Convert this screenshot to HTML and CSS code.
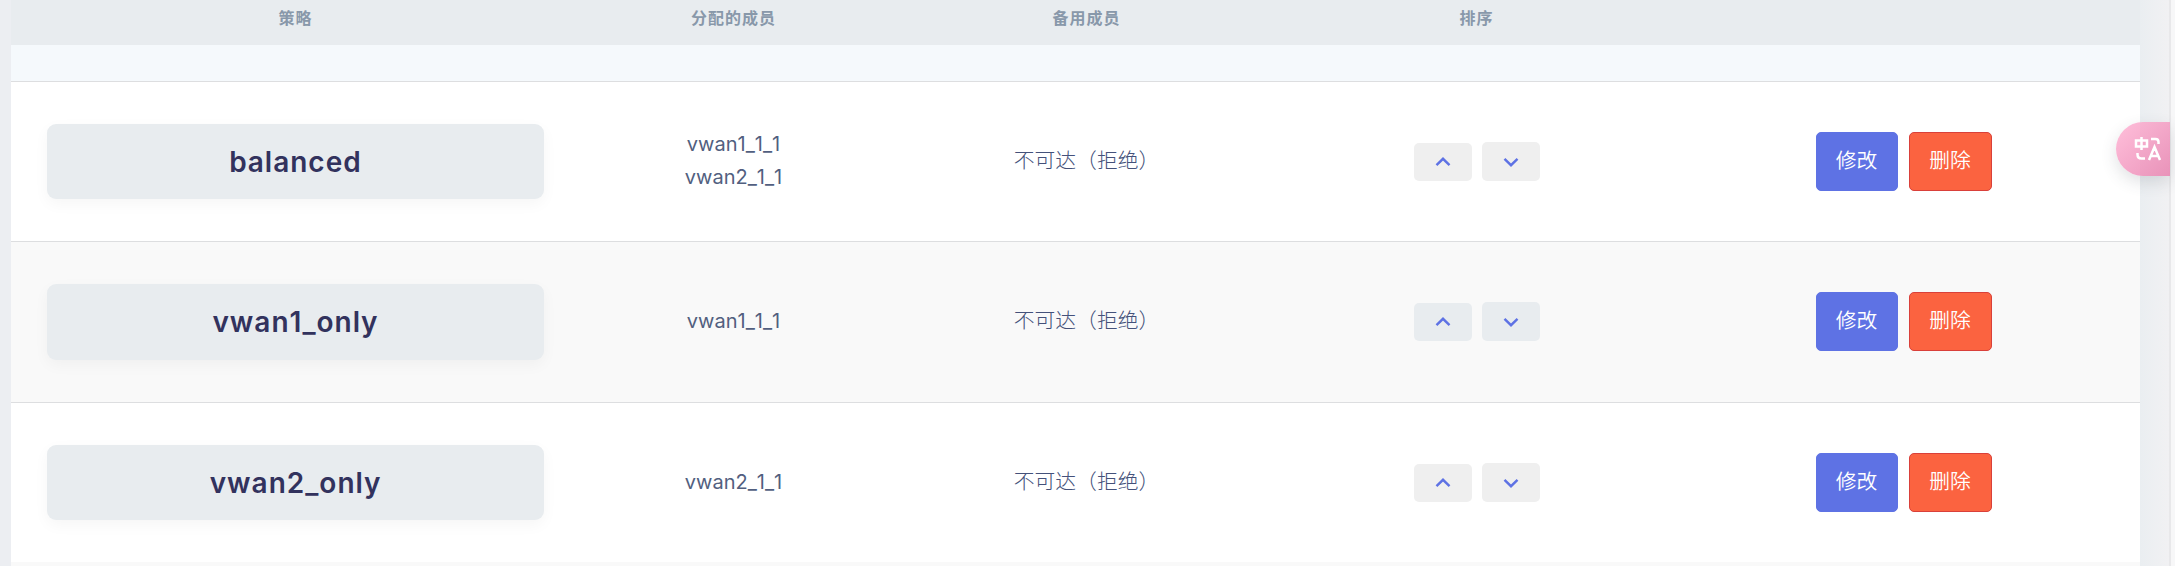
FILE: index.html
```html
<!DOCTYPE html>
<html lang="zh-CN">
<head>
<meta charset="utf-8">
<title>策略</title>
<link rel="stylesheet" href="styles.css">
</head>
<body>
<main class="table">
  <div class="row head"><div>策略</div><div>分配的成员</div><div>备用成员</div><div>排序</div><div></div></div>
  <div class="spacer"></div>
  <div class="row item">
    <div class="name-cell"><div class="name">balanced</div></div>
    <div class="members"><span>vwan1_1_1</span><span>vwan2_1_1</span></div>
    <div class="fallback">不可达（拒绝）</div>
    <div class="sort"><button class="move up"><svg viewBox="0 0 16 10"><path d="M1.5 8.2 8 1.8l6.500 6.400"/></svg></button><button class="move"><svg viewBox="0 0 16 10"><path d="M1.500 1.800 8 8.200l6.500-6.400"/></svg></button></div>
    <div class="actions"><button class="btn edit">修改</button><button class="btn remove">删除</button></div>
  </div>
  <div class="row item alt">
    <div class="name-cell"><div class="name">vwan1_only</div></div>
    <div class="members"><span>vwan1_1_1</span></div>
    <div class="fallback">不可达（拒绝）</div>
    <div class="sort"><button class="move up"><svg viewBox="0 0 16 10"><path d="M1.5 8.2 8 1.8l6.500 6.400"/></svg></button><button class="move"><svg viewBox="0 0 16 10"><path d="M1.500 1.800 8 8.200l6.500-6.400"/></svg></button></div>
    <div class="actions"><button class="btn edit">修改</button><button class="btn remove">删除</button></div>
  </div>
  <div class="row item">
    <div class="name-cell"><div class="name">vwan2_only</div></div>
    <div class="members"><span>vwan2_1_1</span></div>
    <div class="fallback">不可达（拒绝）</div>
    <div class="sort"><button class="move up"><svg viewBox="0 0 16 10"><path d="M1.5 8.2 8 1.8l6.500 6.400"/></svg></button><button class="move"><svg viewBox="0 0 16 10"><path d="M1.500 1.800 8 8.200l6.500-6.400"/></svg></button></div>
    <div class="actions"><button class="btn edit">修改</button><button class="btn remove">删除</button></div>
  </div>
  <div class="tail"></div>
</main>
<aside class="gutter"></aside>
<div class="translate">
  <svg viewBox="0 0 28 28"><path d="M2 6.500h11v6H2zM7.500 3v13M17 5h4.500q3 0 3 3v2M3.500 19v1.500q0 4 4 4H11M15 26l5.500-13L26 26M17 22h7"/></svg>
</div>
</body>
</html>
```
FILE: styles.css
```css
* { box-sizing: border-box; }
body {
  margin: 0;
  height: 566px;
  overflow: hidden;
  position: relative;
  display: flex;
  padding-left: 11px;
  background: #eceef2;
  color: #525f7f;
  font: 350 20.8px/33px Inter, "Noto Sans CJK SC", sans-serif;
}
body::after { content: ""; flex: 1; background: #f7f7f8; }
.table { width: 2129px; background: #fff; }
.row {
  display: grid;
  grid-template-columns: 569px 307px 399px 381px 473px;
  align-items: center;
  text-align: center;
}
.head {
  height: 45px;
  padding-bottom: 11px;
  background: #e8ecef;
  color: #8898aa;
  font: 700 16px/24px "Noto Sans CJK SC", sans-serif;
  letter-spacing: 1px;
}
.spacer { height: 36px; background: #f5f9fc; }
.item { height: 160px; border-top: 1px solid #dddee0; }
.alt { height: 161px; padding-bottom: 1px; background: #f9f9f9; }
.tail { height: 4px; background: #f9f9f9; }
.name-cell { padding: 0 36px; }
.name {
  height: 75px;
  display: flex;
  align-items: center;
  justify-content: center;
  padding-top: 1px;
  border-radius: 9px;
  background: #e8ecef;
  box-shadow: 0 5px 15px rgba(0, 0, 0, .04);
  color: #32325d;
  font-size: 28px;
  font-weight: 600;
  font-kerning: none;
  letter-spacing: 1px;
}
.alt .name { height: 76px; }
.members {
  display: flex;
  flex-direction: column;
  align-items: center;
  padding-bottom: 1px;
  font-size: 20px;
  font-weight: 400;
  font-kerning: none;
  font-feature-settings: "calt" 0;
}
.fallback { padding-bottom: 2px; color: #44517a; font-weight: 300; }
.sort, .actions { display: flex; justify-content: center; align-items: center; }
.sort { gap: 10px; }
.actions { gap: 11px; }
.move {
  width: 58px;
  height: 39px;
  padding: 0;
  border: 0;
  border-radius: 5px;
  background: #efefef;
}
.up { height: 38px; }
.alt .move { background: #e8ecef; }
.move svg { width: 16px; height: 10px; display: block; margin: 0 auto; }
.move path { fill: none; stroke: #5e72e4; stroke-width: 2.4; }
.btn {
  width: 82px;
  height: 59px;
  padding: 0 0 3px;
  border: 1px solid #5e72e4;
  border-radius: 5px;
  background: #5e72e4;
  color: #fff;
  font: inherit;
}
.remove { width: 83px; border-color: #d9403a; background: #fb6340; }
.gutter {
  width: 31px;
  border-right: 2px solid #e8e8ea;
  background: linear-gradient(90deg, #eaeef1, #f1f1f3);
}
.translate {
  position: absolute;
  left: 2116px;
  top: 122px;
  width: 54px;
  height: 54px;
  padding: 12px 0 0 18px;
  border-radius: 27px 0 0 27px;
  background: linear-gradient(135deg, rgba(255, 180, 212, .85), rgba(232, 130, 175, .85));
  box-shadow: 0 6px 16px rgba(60, 70, 80, .16);
}
.translate svg { width: 28px; height: 28px; display: block; }
.translate path { fill: none; stroke: #fff; stroke-width: 2.5; }
```
